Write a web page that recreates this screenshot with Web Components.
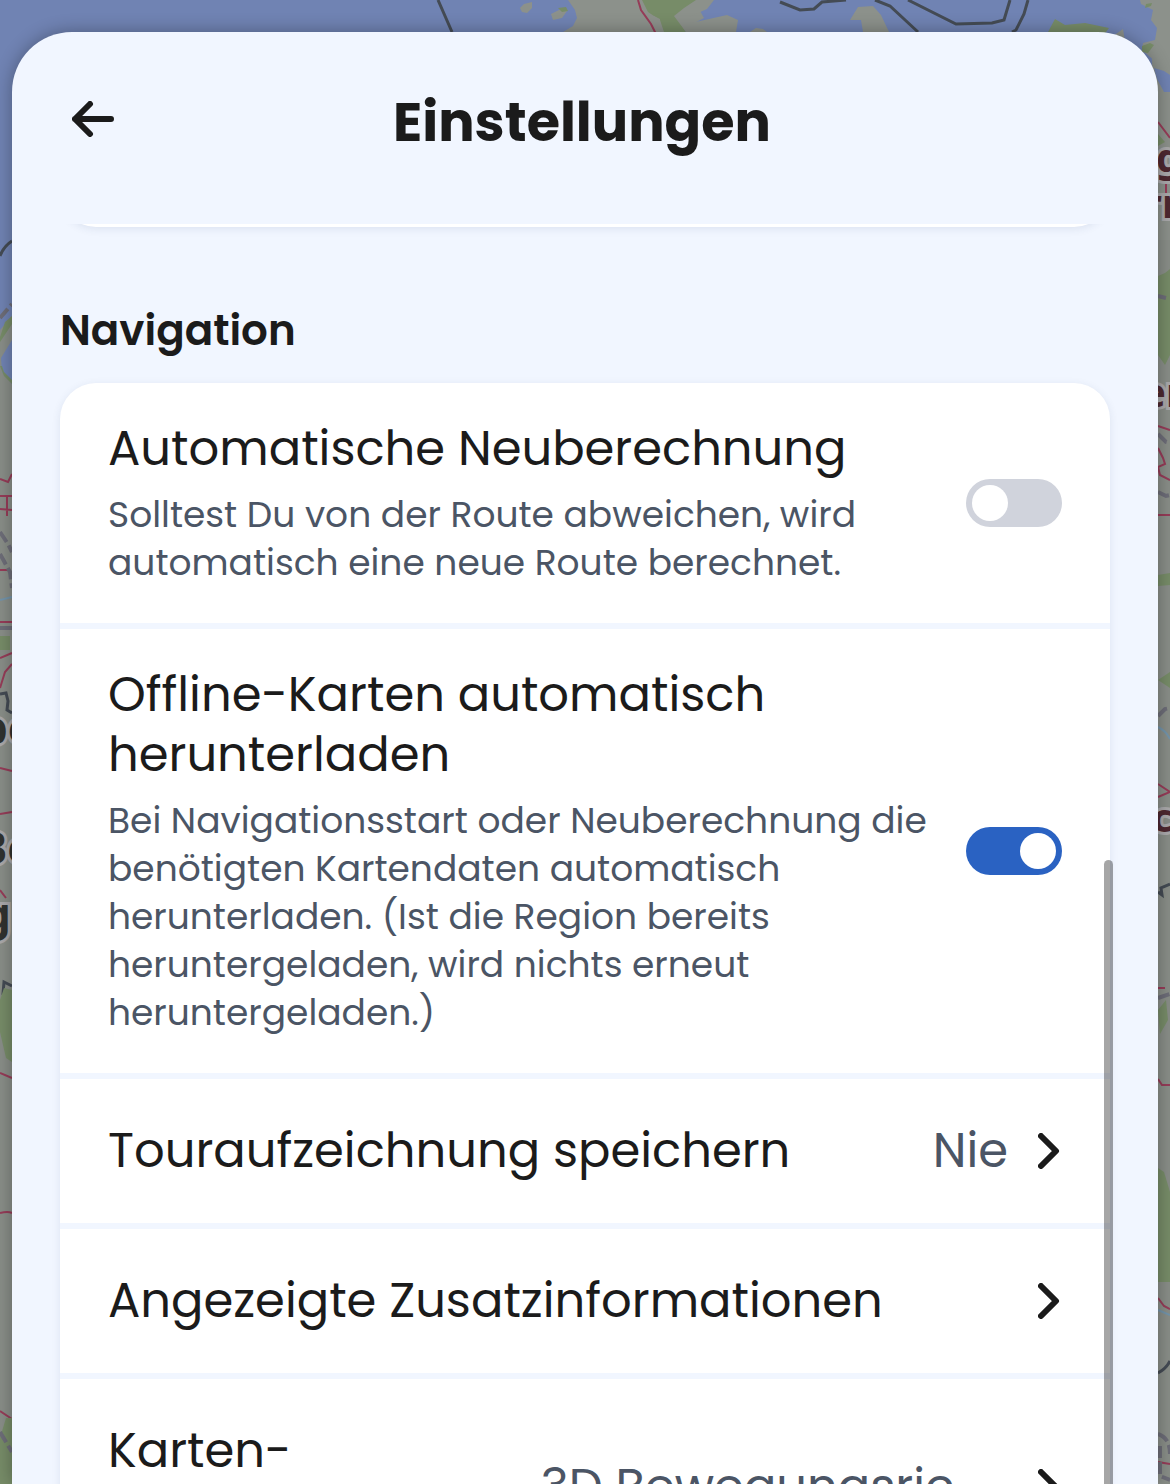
<!DOCTYPE html>
<html lang="de">
<head>
<meta charset="utf-8">
<meta name="viewport" content="width=device-width, initial-scale=1">
<title>Einstellungen</title>
<style>
  html, body {
    height: 100%;
    margin: 0;
  }

  body {
    overflow: hidden;
    font-family: Poppins, Inter, "Liberation Sans", sans-serif;
    color: #1b1b1b;

    --color-sheet: #f1f6ff;
    --color-card: #ffffff;
    --color-muted: #4b5565;
    --color-blue: #2a62c2;
    --color-off: #d0d3dc;
  }
</style>
</head>
<body>

<settings-page>
  <map-backdrop slot="map"></map-backdrop>
  <settings-sheet heading="Einstellungen">
    <settings-card class="previous"></settings-card>
    <settings-section heading="Navigation">
      <settings-card>
        <toggle-row heading="Automatische Neuberechnung">Solltest Du von der Route abweichen, wird automatisch eine neue Route berechnet.</toggle-row>
        <toggle-row heading="Offline-Karten automatisch herunterladen" checked>Bei Navigationsstart oder Neuberechnung die benötigten Kartendaten automatisch herunterladen. (Ist die Region bereits heruntergeladen, wird nichts erneut heruntergeladen.)</toggle-row>
        <link-row value="Nie">Touraufzeichnung speichern</link-row>
        <link-row>Angezeigte Zusatzinformationen</link-row>
        <link-row value="3D Bewegungsrichtung" tall>Karten-</link-row>
      </settings-card>
    </settings-section>
  </settings-sheet>
</settings-page>

<script>
class SettingsPage extends HTMLElement {
  constructor() {
    super();
    this.attachShadow({ mode: 'open' }).innerHTML = `
      <style>
        :host {
          display: grid;
          height: 100%;
          grid-template: minmax(0, 1fr) / minmax(0, 1fr);
        }

        /* map and sheet share one cell, the sheet lies on top */
        slot::slotted(*) {
          grid-area: 1 / 1;
        }
      </style>
      <slot name="map"></slot>
      <slot></slot>
    `;
  }
}

class MapBackdrop extends HTMLElement {
  constructor() {
    super();
    this.attachShadow({ mode: 'open' }).innerHTML = `
      <style>
        :host {
          display: block;
          overflow: hidden;
          background: #898e88;
        }

        svg {
          display: block;
          width: 100%;
          height: 100%;
        }

        .sea { fill: #7083b3; }
        .land { fill: #8c918b; }
        .wood { fill: #778c68; }
        .road { fill: none; stroke: #963c58; stroke-width: 2; }
        .line { fill: none; stroke: #444b54; stroke-width: 3; }
        .rail { fill: none; stroke: #6d6d78; stroke-width: 4; stroke-dasharray: 12 4; }
        .river { fill: none; stroke: #7394aa; stroke-width: 2; }

        text {
          font: 700 44px "Noto Sans", sans-serif;
          fill: #303230;
          stroke: #aaa9ab;
          stroke-width: 6;
          paint-order: stroke;
        }

        .town {
          font-size: 40px;
          fill: #4d2830;
        }
      </style>
      <svg viewBox="0 0 1170 1484" preserveAspectRatio="xMidYMin slice" aria-hidden="true">
        <path class="sea" d="M0 0H1170V60L1100 200H0Z"/>
        <path class="sea" d="M0 180H40V384L12 384 2 372 1 358 12 340V316L0 330Z"/>
        <path class="wood" d="M12 316l-7 6-5 15v5l12-18zM0 366l4 10 8 8v-4l-8-8-2-6z"/>

        <path class="land" d="M568 0l7 10 2 8-4 8-10 6h115l26-14-5-9 11-10 10-5V0z"/>
        <path class="wood" d="M642 0h62l-3 6-16 8-7 6 8 12h-22l-4-12-12-8z"/>
        <path class="land" d="M654 16l6 3v5l-6 2-4-7zM714 0l-7 9-18 8 2 6 36-8 11 5-2 12h-50l-12-16 10-8 12-8z"/>
        <path class="land" d="M520 8l4-4 8-2v6l-5 5-5-1zM551 14l12-6 4 3-5 7-9 2zM750 32l6-4 7 1 4 3zM850 20l8-13 15-1 8 9 8 17h-26l-2-12z"/>
        <path class="wood" d="M558 8l8-1 2 4-6 1zM1048 32l7-13 10 6 20-2 24 5-6 8h-46z"/>
        <path class="land" d="M1113 36l10-7 2 12zM1170 0v70l-14-8-14-12 1-7 12-3 2-12-6-8 2-10-12-6-2-8 14-2 2-3z"/>
        <path class="wood" d="M1146 4l6-1-1 3-6 2zM1142 46l8-3 4 2-6 8-6-1z"/>
        <path class="land" d="M1152 58h18V240H1156z"/>
        <path class="sea" d="M1154 68l10 3 6 4v17h-6l-7-13z"/>

        <path class="line" d="M438 0l14 32M780 2l20 8 14-1 8-7 24-2M875 0l15 6 28 26M908 0l48 24 36-1 12-3 6-20M1028 0l-4 14-8 16-4 2"/>
        <path class="line" d="M0 256q4-10 12-15M0 694l6-1 2 8-1 9 5 3M12 986l-8-4-1 12 4 10-3 16 8 8v12l-3 6 3 10M1158 892l4 3-1-7 9-4M1158 1202q8 2 12 12M1158 1373q8-4 12-12"/>

        <path class="road" d="M638 0l3 10 10 14 6 12M1158 122l12 16M1166 180v22M0 479l8 3 4-8M0 496h12M0 509l12 1M7 496v20M0 570h10M0 622h12M0 658l12-5M0 688l5-16 7-8M0 768l12 3M0 814l12-2M0 890l6 8M0 1073l12 5M0 1213q8-2 12 0M0 1411l12 8"/>
        <path class="road" d="M1158 426l12 4M1158 448l5 10 2 6-7 3 2 8 10 5M1158 515h12M1158 784l12 8-12 5M1158 1079l4 6h8M1158 1298l6 8 6 3M1158 988h7M1158 1462l12 2"/>
        <path class="wood" d="M0 636h10v14H0zM0 1000l4-12 8 2v72l-6-4-6-26zM6 1418h6v66H0v-46zM1158 276l7-3 5-4v86l-5 10-7-10zM1158 134l7 8-7 4zM1158 575l12-2v12l-12 1zM1158 680l12-8v16zM1158 1010l8-10 2 20-8 14zM1158 1168l6 4 6 20v90h-12z"/>
        <path class="rail" d="M0 318l12-14M0 532l8 12 4 8M0 554l10 18 2 16M0 628h12M0 1432l12 20M1158 296l8 2M1158 434l8 8 4 1M1158 492l8 4 4-1M1158 716l7-7 5-1M1158 998l12-4M1158 1434q12 4 12 20M1160 1446v30l10 4"/>
        <path class="river" d="M0 600l12-3M1158 727q8 4 12 12M1158 1310l12 5"/>

        <text x="-20" y="744">be</text>
        <text x="-22" y="864">Be</text>
        <text x="-17" y="930">g</text>
        <text class="town" x="1156" y="172">g</text>
        <text class="town" x="1144" y="218">rn</text>
        <text class="town" x="1142" y="407">er</text>
        <text class="town" x="1152" y="832">c</text>
      </svg>
    `;
  }
}

class SettingsSheet extends HTMLElement {
  constructor() {
    super();
    this.attachShadow({ mode: 'open' }).innerHTML = `
      <style>
        :host {
          position: relative;
          display: flex;
          flex-direction: column;
          margin: 32px 12px 0;
          min-height: 0;
          border-radius: 60px 60px 0 0;
          background: var(--color-sheet);
          box-shadow: 0 0 18px rgba(0, 0, 0, 0.32);
        }

        header {
          display: grid;
          grid-template-columns: 66px 1fr 72px;
          align-items: start;
          padding: 51px 48px 63px;
        }

        button {
          display: grid;
          place-items: center;
          height: 72px;
          padding: 0;
          border: 0;
          background: none;
          color: inherit;
        }

        h1 {
          margin: 0;
          font-size: 54px;
          line-height: 78px;
          font-weight: 700;
          text-align: center;
        }

        main {
          flex: 1;
          min-height: 0;
          overflow: hidden;
          padding: 0 48px;
        }

        .thumb {
          position: absolute;
          right: 45px;
          top: 57%;
          bottom: 0;
          width: 9px;
          border-radius: 5px 5px 0 0;
          background: rgba(0, 0, 0, 0.35);
        }
      </style>

      <header>
        <button type="button" aria-label="Zurück">
          <svg width="42" height="36" viewBox="0 0 42 36" fill="none" stroke="currentColor" stroke-width="6" stroke-linecap="round" stroke-linejoin="round">
            <path d="M39 18H3M18 3L3 18l15 15"/>
          </svg>
        </button>
        <h1></h1>
      </header>
      <main><slot></slot></main>
      <div class="thumb"></div>
    `;
    this.shadowRoot.querySelector('h1').textContent = this.getAttribute('heading');
  }
}

class SettingsSection extends HTMLElement {
  constructor() {
    super();
    this.attachShadow({ mode: 'open' }).innerHTML = `
      <style>
        :host {
          display: block;
          margin-top: 72px;
        }

        h2 {
          margin: 0 0 21px;
          font-size: 42px;
          line-height: 63px;
          font-weight: 600;
        }
      </style>
      <h2></h2>
      <slot></slot>
    `;
    this.shadowRoot.querySelector('h2').textContent = this.getAttribute('heading');
  }
}

class SettingsCard extends HTMLElement {
  constructor() {
    super();
    this.attachShadow({ mode: 'open' }).innerHTML = `
      <style>
        :host {
          display: flex;
          flex-direction: column;
          gap: 6px;
          border-radius: 36px;
          background: var(--color-card);
          box-shadow: 0 2px 8px rgba(40, 60, 110, 0.1);
        }

        /* scrolled away under the header, only its lower edge shows */
        :host(.previous) {
          height: 144px;
          margin-top: -141px;
        }

        ::slotted(:not(:last-child)) {
          box-shadow: 0 6px var(--color-sheet);
        }
      </style>
      <slot></slot>
    `;
  }
}

class ToggleRow extends HTMLElement {
  constructor() {
    super();
    this.attachShadow({ mode: 'open' }).innerHTML = `
      <style>
        :host {
          display: flex;
          align-items: center;
          gap: 24px;
          padding: 36px 48px;
        }

        .text {
          flex: 1;
          min-width: 0;
        }

        label {
          display: block;
          font-size: 48px;
          line-height: 60px;
        }

        p {
          margin: 12px 0 0;
          font-size: 36px;
          line-height: 48px;
          color: var(--color-muted);
        }

        input {
          appearance: none;
          flex: none;
          box-sizing: border-box;
          width: 96px;
          height: 48px;
          margin: 0;
          padding: 6px;
          border-radius: 24px;
          background: var(--color-off);
        }

        input::before {
          content: '';
          display: block;
          width: 36px;
          height: 36px;
          border-radius: 50%;
          background: var(--color-card);
        }

        input:checked {
          background: var(--color-blue);
        }

        input:checked::before {
          margin-left: auto;
        }
      </style>
      <div class="text">
        <label for="switch"></label>
        <p id="hint"><slot></slot></p>
      </div>
      <input id="switch" type="checkbox" role="switch" aria-describedby="hint">
    `;
    this.shadowRoot.querySelector('label').textContent = this.getAttribute('heading');
    this.shadowRoot.querySelector('input').checked = this.hasAttribute('checked');
  }
}

class LinkRow extends HTMLElement {
  constructor() {
    super();
    this.attachShadow({ mode: 'open' }).innerHTML = `
      <style>
        :host {
          display: block;
        }

        a {
          display: flex;
          align-items: center;
          gap: 30px;
          padding: 42px 48px;
          font-size: 48px;
          line-height: 60px;
          color: inherit;
          text-decoration: none;
        }

        .title {
          flex: 1;
          min-width: 0;
        }

        :host([tall]) .title {
          min-height: 132px;
        }

        .value {
          max-width: 49%;
          overflow: hidden;
          color: var(--color-muted);
          text-overflow: ellipsis;
          white-space: nowrap;
        }
      </style>
      <a href="#">
        <span class="title"><slot></slot></span>
        <span class="value"></span>
        <svg width="24" height="36" viewBox="0 0 24 36" fill="none" stroke="currentColor" stroke-width="6" stroke-linecap="round" stroke-linejoin="round">
          <path d="M3 3l15 15L3 33"/>
        </svg>
      </a>
    `;
    this.shadowRoot.querySelector('.value').textContent = this.getAttribute('value') || '';
  }
}

customElements.define('settings-page', SettingsPage);
customElements.define('map-backdrop', MapBackdrop);
customElements.define('settings-sheet', SettingsSheet);
customElements.define('settings-section', SettingsSection);
customElements.define('settings-card', SettingsCard);
customElements.define('toggle-row', ToggleRow);
customElements.define('link-row', LinkRow);
</script>
</body>
</html>
